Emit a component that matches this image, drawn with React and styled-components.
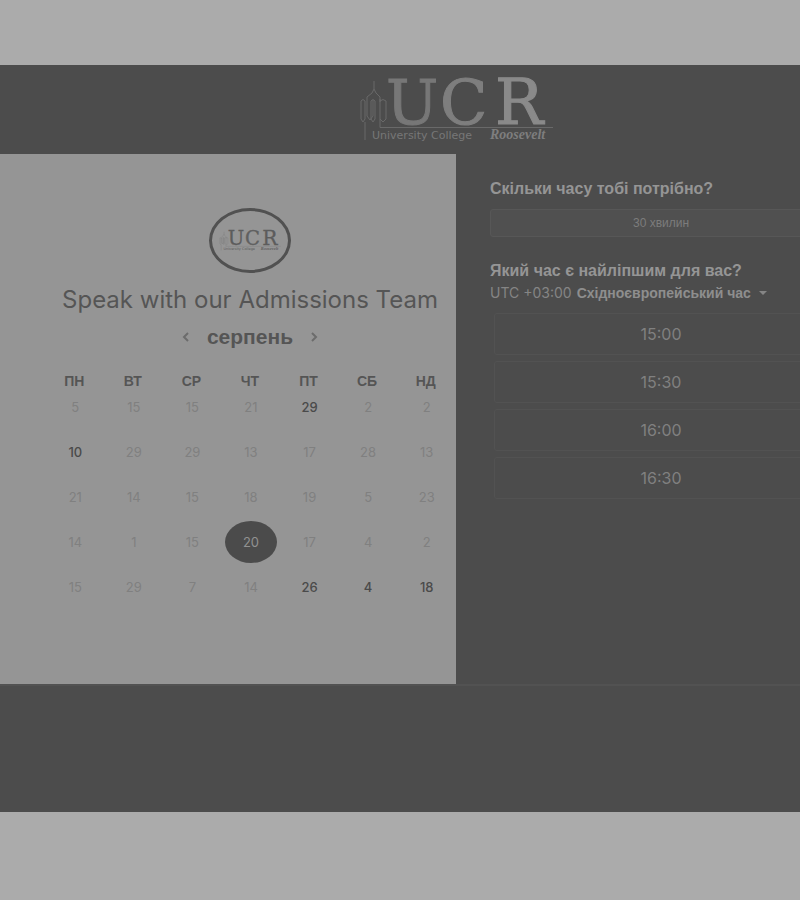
import React, { useState } from "react";
import styled, { createGlobalStyle } from "styled-components";

const GlobalStyle = createGlobalStyle`
  *, *::before, *::after { box-sizing: border-box; }
  body {
    margin: 0;
    background: #ababab;
    color: #858585;
    font-family: Inter, "Liberation Sans", sans-serif;
    overflow-x: hidden;
  }
  button { font: inherit; color: inherit; border: 0; padding: 0; background: none; cursor: pointer; }
`;

const Viewport = styled.div`
  overflow: hidden;
  padding: 65px 0 88px;
`;

const Page = styled.div`
  width: 114%;
  background: #4c4c4c;
`;

const Header = styled.header`
  display: flex;
  justify-content: center;
  padding: 11px 0 12px;
`;

const HeaderLogo = styled.svg`
  display: block;
  width: 196px;
  height: 66px;
  overflow: visible;
`;

const Columns = styled.main`
  display: grid;
  grid-template-columns: 1fr 1fr;
  border-bottom: 2px solid #525252;
`;

const CalendarPanel = styled.section`
  display: flex;
  flex-direction: column;
  align-items: center;
  padding: 54px 1px 69px 45px;
  background: #959595;
  color: #555;
`;

const Badge = styled.div`
  display: flex;
  align-items: center;
  justify-content: center;
  width: 82px;
  height: 65px;
  border: 3px solid #515151;
  border-radius: 50%;
`;

const BadgeLogo = styled.svg`
  display: block;
  width: 62px;
  height: 21px;
  overflow: visible;
`;

const Title = styled.h1`
  margin: 13px 0 0;
  font-size: 24px;
  font-weight: 400;
  line-height: 28px;
  white-space: nowrap;
`;

const MonthNav = styled.div`
  display: flex;
  align-items: center;
  gap: 16px;
  margin-top: 10px;
`;

const Month = styled.h2`
  margin: 0;
  font: 700 21px/26px "Liberation Sans", Arial, sans-serif;
`;

const ArrowButton = styled.button`
  display: flex;
  justify-content: center;
  width: 10px;
  color: #6c6c6c;
`;

const Calendar = styled.table`
  width: 100%;
  margin-top: 23px;
  border-collapse: collapse;
  table-layout: fixed;
`;

const Weekday = styled.th`
  padding: 0;
  font: 700 14px/17px "Liberation Sans", Arial, sans-serif;
  text-align: center;
`;

const DayCell = styled.td`
  height: 45px;
  padding: 0 0 11px 2px;
  text-align: center;
`;

const Day = styled.button`
  width: 52px;
  height: ${(p) => (p.$selected ? 42 : 34)}px;
  margin: ${(p) => (p.$selected ? "-4px 0" : "0")};
  border-radius: 50%;
  display: inline-flex;
  align-items: center;
  justify-content: center;
  background: ${(p) => (p.$selected ? "#4b4b4b" : "transparent")};
  color: ${(p) => (p.$selected ? "#919191" : p.$open ? "#4a4a4a" : "#808080")};
  font-size: 13px;
  font-weight: ${(p) => (p.$open && !p.$selected ? 500 : 400)};
`;

const TimePanel = styled.section`
  padding: 25px 80px 0 34px;
`;

const Question = styled.h3`
  margin: 0;
  color: #959595;
  font: 700 16px/20px "Liberation Sans", Arial, sans-serif;
`;

const Duration = styled.button`
  display: block;
  width: 100%;
  height: 28px;
  margin: 10px 0 24px;
  border: 1px solid #575757;
  border-radius: 3px;
  background: #505050;
  color: #7c7c7c;
  font: 400 12px/16px "Liberation Sans", Arial, sans-serif;
`;

const Timezone = styled.button`
  display: flex;
  align-items: center;
  gap: 5px;
  margin-top: 3px;
  font-size: 14px;
  line-height: 18px;
  white-space: nowrap;
`;

const ZoneName = styled.strong`
  color: #8e8e8e;
  font: 700 14px/18px "Liberation Sans", Arial, sans-serif;
`;

const Caret = styled.svg`
  width: 8px;
  height: 4px;
  margin-left: 3px;
`;

const Slots = styled.ul`
  display: grid;
  gap: 6px;
  margin: 11px 0 0;
  padding: 0 4px;
  list-style: none;
`;

const Slot = styled.button`
  display: block;
  width: 100%;
  height: 42px;
  border: 1px solid #525252;
  border-radius: 3px;
  color: #808080;
  font-size: 16px;
`;

const Footer = styled.footer`
  height: 126px;
`;

function LogoArt({ tones, lineColor }) {
  return (
    <>
      <g fill="none" stroke={lineColor} strokeWidth="1">
        <path d="M16 5v8M16 13l-2 4-5 4v5M16 13l2 4 4 4v5M9 26v14l3 4 3-4V24M22 23v28.500h173" />
        <path d="M3 25q2-3 4 0v18l-2 3-2-3zM13 25q2-3 4 0v18l-2 3-2-3zM22 25q3-3 6 0v18l-3 3-3-3M7 46v18" />
      </g>
      <g fontFamily="DejaVu Serif, serif" fontSize="62" strokeWidth="1">
        <text x="28" y="48" fill={tones[0]} stroke={tones[0]}>U</text>
        <text x="82" y="48" fill={tones[1]} stroke={tones[1]}>C</text>
        <text x="137" y="48" fontSize="64" fill={tones[2]} stroke={tones[2]}>R</text>
      </g>
      <text x="14" y="63" fill={tones[0]} fontFamily="DejaVu Sans, sans-serif" fontSize="11">
        University College
      </text>
      <text
        x="132"
        y="63"
        fill={tones[1]}
        fontFamily="Liberation Serif, serif"
        fontSize="14"
        fontStyle="italic"
        fontWeight="700"
      >
        Roosevelt
      </text>
    </>
  );
}

function Chevron({ d }) {
  return (
    <svg width="8" height="10" viewBox="0 0 8 10" fill="none" stroke="currentColor" strokeWidth="2" aria-hidden="true">
      <path d={d} />
    </svg>
  );
}

const weekdays = ["ПН", "ВТ", "СР", "ЧТ", "ПТ", "СБ", "НД"];
const weeks = [
  [5, 15, 15, 21, 29, 2, 2],
  [10, 29, 29, 13, 17, 28, 13],
  [21, 14, 15, 18, 19, 5, 23],
  [14, 1, 15, 20, 17, 4, 2],
  [15, 29, 7, 14, 26, 4, 18],
];
const openDays = ["0-4", "1-0", "3-3", "4-4", "4-5", "4-6"];
const times = ["15:00", "15:30", "16:00", "16:30"];

export default function App() {
  const [selected, setSelected] = useState("3-3");

  return (
    <>
      <GlobalStyle />
      <Viewport>
        <Page>
          <Header>
            <HeaderLogo viewBox="0 0 196 66" role="img" aria-label="University College Roosevelt">
              <LogoArt tones={["#777", "#7e7e7e", "#8a8a8a"]} lineColor="#696969" />
            </HeaderLogo>
          </Header>
          <Columns>
            <CalendarPanel>
              <Badge>
                <BadgeLogo viewBox="0 0 196 66" role="img" aria-label="UCR">
                  <LogoArt tones={["#5c5c5c", "#606060", "#5c5c5c"]} lineColor="#777" />
                </BadgeLogo>
              </Badge>
              <Title>Speak with our Admissions Team</Title>
              <MonthNav>
                <ArrowButton type="button" aria-label="Попередній місяць">
                  <Chevron d="M6 1 2 5l4 4" />
                </ArrowButton>
                <Month>серпень</Month>
                <ArrowButton type="button" aria-label="Наступний місяць">
                  <Chevron d="m2 1 4 4-4 4" />
                </ArrowButton>
              </MonthNav>
              <Calendar>
                <thead>
                  <tr>
                    {weekdays.map((name) => (
                      <Weekday key={name} scope="col">{name}</Weekday>
                    ))}
                  </tr>
                </thead>
                <tbody>
                  {weeks.map((week, row) => (
                    <tr key={row}>
                      {week.map((day, col) => {
                        const id = `${row}-${col}`;
                        const open = openDays.includes(id);
                        return (
                          <DayCell key={id}>
                            <Day
                              type="button"
                              disabled={!open}
                              $open={open}
                              $selected={selected === id}
                              aria-pressed={selected === id}
                              onClick={() => setSelected(id)}
                            >
                              {day}
                            </Day>
                          </DayCell>
                        );
                      })}
                    </tr>
                  ))}
                </tbody>
              </Calendar>
            </CalendarPanel>
            <TimePanel>
              <Question>Скільки часу тобі потрібно?</Question>
              <Duration type="button">30 хвилин</Duration>
              <Question>Який час є найліпшим для вас?</Question>
              <Timezone type="button" aria-haspopup="listbox">
                <span>UTC +03:00</span>
                <ZoneName>Східноєвропейський час</ZoneName>
                <Caret viewBox="0 0 8 4" aria-hidden="true">
                  <path d="M0 0h8L4 4z" fill="currentColor" />
                </Caret>
              </Timezone>
              <Slots>
                {times.map((time) => (
                  <li key={time}>
                    <Slot type="button">{time}</Slot>
                  </li>
                ))}
              </Slots>
            </TimePanel>
          </Columns>
          <Footer />
        </Page>
      </Viewport>
    </>
  );
}
